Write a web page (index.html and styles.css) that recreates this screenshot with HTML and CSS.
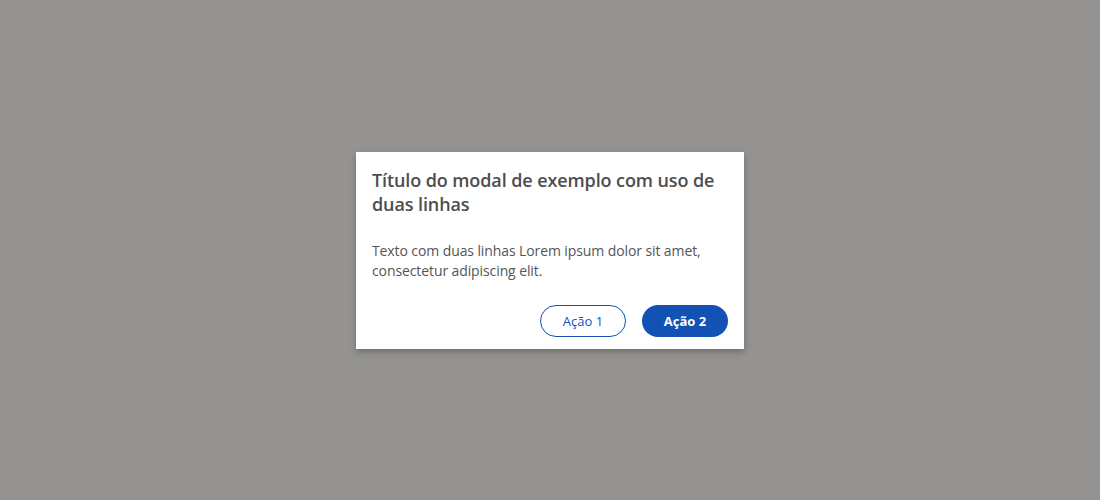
FILE: index.html
```html
<!DOCTYPE html>
<html lang="pt">
<head>
<meta charset="utf-8">
<link rel="stylesheet" href="styles.css">
</head>
<body>
<div class="overlay">
  <div class="modal">
    <h1 class="title">Título do modal de exemplo com uso de duas linhas</h1>
    <p class="text">Texto com duas linhas Lorem ipsum dolor sit amet, consectetur adipiscing elit.</p>
    <div class="actions">
      <button class="btn secondary">Ação 1</button>
      <button class="btn primary">Ação 2</button>
    </div>
  </div>
</div>
</body>
</html>
```
FILE: styles.css
```css
html, body {
  margin: 0;
  padding: 0;
  width: 1100px;
  height: 500px;
}
body {
  background: #949391;
  font-family: "Open Sans", "Noto Sans", sans-serif;
}
.overlay {
  width: 1100px;
  height: 500px;
  display: flex;
  align-items: center;
  justify-content: center;
}
.modal {
  width: 388px;
  box-sizing: border-box;
  background: #fff;
  padding: 16px 16px 12px 16px;
  box-shadow: 0 3px 6px rgba(0, 0, 0, 0.25);
  margin-top: 1px;
}
.title {
  margin: 0;
  font-size: 18px;
  line-height: 24px;
  font-weight: 600;
  color: #4d4d4d;
  letter-spacing: -0.1px;
}
.text {
  margin: 25px 0 0 0;
  font-size: 14px;
  line-height: 20px;
  color: #555;
  letter-spacing: -0.1px;
}
.actions {
  margin-top: 24px;
  display: flex;
  justify-content: flex-end;
  gap: 16px;
}
.btn {
  width: 86px;
  height: 32px;
  border-radius: 16px;
  font-family: "Open Sans", "Noto Sans", sans-serif;
  font-size: 13px;
  cursor: pointer;
  box-sizing: border-box;
}
.secondary {
  background: #fff;
  border: 1px solid #1351b4;
  color: #1351b4;
}
.primary {
  background: #1351b4;
  border: none;
  color: #fff;
  font-weight: 700;
}
```
